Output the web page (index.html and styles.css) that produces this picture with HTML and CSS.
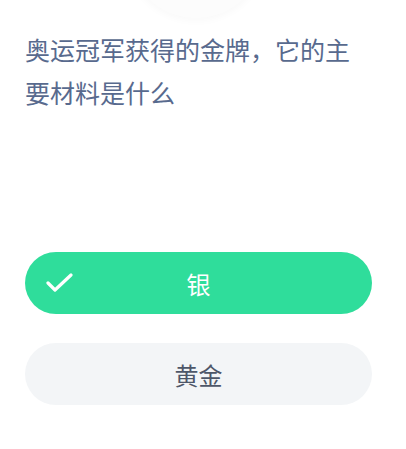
FILE: index.html
```html
<!DOCTYPE html>
<html lang="zh-CN">
<head>
    <meta charset="UTF-8">
    <meta name="viewport" content="width=device-width, initial-scale=1.0">
    <title>答题</title>
    <link rel="stylesheet" href="styles.css">
</head>
<body>
    <div class="quiz">
        <div class="medal"></div>
        <p class="question">奥运冠军获得的金牌，它的主要材料是什么</p>
        <div class="options">
            <div class="option option-correct">
                <svg class="check" width="28" height="20" viewBox="0 0 28 20">
                    <polyline points="2,10 9,17 25,2" fill="none" stroke="#fff" stroke-width="3.2" stroke-linecap="round" stroke-linejoin="round"/>
                </svg>
                <span class="option-text">银</span>
            </div>
            <div class="option">
                <span class="option-text">黄金</span>
            </div>
        </div>
    </div>
</body>
</html>
```

FILE: styles.css
```css
body {
    margin: 0;
    background-color: #fff;
    font-family: "Noto Sans CJK SC", "Noto Sans", sans-serif;
    overflow: hidden;
}

.quiz {
    width: 347px;
    padding-left: 25px;
}

.medal {
    width: 140px;
    height: 140px;
    margin-top: -122px;
    margin-left: 101px;
    border-radius: 50%;
    background-color: #fcfcfc;
    box-shadow: 0 2px 8px rgba(0, 0, 0, 0.03);
}

.question {
    margin: 10px 0 0;
    font-size: 25px;
    line-height: 43px;
    color: #586a8e;
}

.options {
    display: flex;
    flex-direction: column;
    gap: 29px;
    margin-top: 138px;
}

.option {
    display: grid;
    grid-template-columns: 1fr auto 1fr;
    align-items: center;
    height: 62px;
    border-radius: 31px;
    background-color: #f3f5f7;
}

.option-text {
    grid-column: 2;
    font-size: 24px;
    color: #4e5769;
}

.option-correct {
    background-color: #2fdd9b;
}

.option-correct .option-text {
    color: #fff;
}

.check {
    grid-column: 1;
    grid-row: 1;
    margin-left: 21px;
}
```
